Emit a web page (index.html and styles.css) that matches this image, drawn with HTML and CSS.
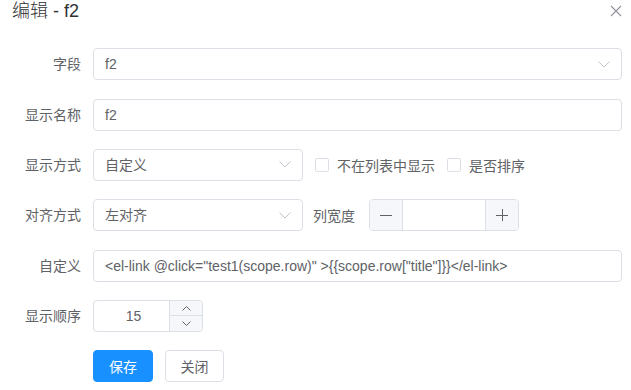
FILE: index.html
```html
<!DOCTYPE html>
<html lang="zh-CN">
<head>
<meta charset="utf-8">
<title>编辑 - f2</title>
<link rel="stylesheet" href="styles.css">
</head>
<body>
<div class="dialog">
  <div class="header">
    <span class="title">编辑 - f2</span>
    <svg class="close" width="12" height="12" viewBox="0 0 12 12"><path d="M1 1L11 11M11 1L1 11" stroke="#909399" stroke-width="1.1" fill="none"/></svg>
  </div>
  <form class="form">
    <div class="row">
      <label class="label">字段</label>
      <div class="content">
        <div class="select full">
          <span class="value">f2</span>
          <svg class="chev" width="12" height="7" viewBox="0 0 12 7"><path d="M0.5 0.5L6 6L11.5 0.5" stroke="#c0c4cc" stroke-width="1" fill="none"/></svg>
        </div>
      </div>
    </div>
    <div class="row">
      <label class="label">显示名称</label>
      <div class="content">
        <div class="input full"><span class="value">f2</span></div>
      </div>
    </div>
    <div class="row">
      <label class="label">显示方式</label>
      <div class="content">
        <div class="select short">
          <span class="value">自定义</span>
          <svg class="chev" width="12" height="7" viewBox="0 0 12 7"><path d="M0.5 0.5L6 6L11.5 0.5" stroke="#c0c4cc" stroke-width="1" fill="none"/></svg>
        </div>
        <div class="checks">
          <span class="check"><span class="box"></span>不在列表中显示</span>
          <span class="check"><span class="box"></span>是否排序</span>
        </div>
      </div>
    </div>
    <div class="row">
      <label class="label">对齐方式</label>
      <div class="content">
        <div class="select short">
          <span class="value">左对齐</span>
          <svg class="chev" width="12" height="7" viewBox="0 0 12 7"><path d="M0.5 0.5L6 6L11.5 0.5" stroke="#c0c4cc" stroke-width="1" fill="none"/></svg>
        </div>
        <span class="inline-label">列宽度</span>
        <div class="numbox">
          <span class="nbtn minus"><svg width="12" height="12" viewBox="0 0 12 12"><path d="M0 6.5H12" stroke="#606266" stroke-width="1"/></svg></span>
          <span class="nval"></span>
          <span class="nbtn plus"><svg width="12" height="12" viewBox="0 0 12 12"><path d="M0 6.5H12M6.5 0V12" stroke="#606266" stroke-width="1"/></svg></span>
        </div>
      </div>
    </div>
    <div class="row">
      <label class="label">自定义</label>
      <div class="content">
        <div class="input full"><span class="value">&lt;el-link @click="test1(scope.row)" &gt;{{scope.row["title"]}}&lt;/el-link&gt;</span></div>
      </div>
    </div>
    <div class="row">
      <label class="label">显示顺序</label>
      <div class="content">
        <div class="spin">
          <span class="sval">15</span>
          <span class="sctrl">
            <span class="sbtn up"><svg width="9" height="5" viewBox="0 0 9 5"><path d="M0.5 4.5L4.5 0.5L8.5 4.5" stroke="#606266" stroke-width="1" fill="none"/></svg></span>
            <span class="sbtn down"><svg width="9" height="5" viewBox="0 0 9 5"><path d="M0.5 0.5L4.5 4.5L8.5 0.5" stroke="#606266" stroke-width="1" fill="none"/></svg></span>
          </span>
        </div>
      </div>
    </div>
    <div class="row">
      <span class="label"></span>
      <div class="content">
        <button type="button" class="btn primary">保存</button>
        <button type="button" class="btn plain">关闭</button>
      </div>
    </div>
  </form>
</div>
</body>
</html>
```
FILE: styles.css
```css
html, body {
  margin: 0;
  padding: 0;
  background: #fff;
}
body {
  font-family: "Liberation Sans", "Noto Sans CJK SC", sans-serif;
  font-size: 14px;
  color: #606266;
}
.dialog {
  width: 631px;
  height: 390px;
  box-sizing: border-box;
}
.header {
  display: flex;
  justify-content: space-between;
  align-items: center;
  height: 22px;
  padding: 0 9px 0 12px;
}
.title {
  font-size: 18px;
  line-height: 22px;
  font-weight: 300;
  color: #303133;
}
.close {
  display: block;
  margin-top: 0;
}
.form {
  margin: 26.33px 0 0 0;
  padding-right: 9px;
}
.row {
  display: flex;
  align-items: center;
  height: 32px;
  margin-bottom: 18.33px;
}
.label {
  width: 93px;
  flex: none;
  box-sizing: border-box;
  padding-right: 12px;
  text-align: right;
  line-height: 32px;
  color: #606266;
}
.content {
  flex: 1;
  display: flex;
  align-items: center;
  height: 32px;
}
.input, .select {
  box-sizing: border-box;
  height: 32px;
  border: 1px solid #dcdfe6;
  border-radius: 4px;
  display: flex;
  align-items: center;
  padding: 0 11px;
  color: #606266;
  background: #fff;
}
.full { width: 100%; }
.short { width: 210px; flex: none; }
.select { justify-content: space-between; }
.value { white-space: nowrap; line-height: 30px; }
.chev { display: block; }
.checks {
  display: flex;
  align-items: center;
  margin-left: 12px;
  gap: 12px;
}
.check {
  display: flex;
  align-items: center;
  gap: 8px;
  color: #606266;
}
.box {
  width: 14px;
  height: 14px;
  box-sizing: border-box;
  border: 1px solid #dcdfe6;
  border-radius: 2px;
  background: #fff;
}
.inline-label {
  margin-left: 10px;
  margin-right: 14px;
}
.numbox {
  width: 150px;
  height: 32px;
  box-sizing: border-box;
  border: 1px solid #dcdfe6;
  border-radius: 4px;
  display: flex;
  overflow: hidden;
}
.nbtn {
  width: 32px;
  flex: none;
  background: #f5f7fa;
  display: flex;
  align-items: center;
  justify-content: center;
}
.nbtn svg { display: block; }
.minus { border-right: 1px solid #dcdfe6; }
.plus { border-left: 1px solid #dcdfe6; }
.nval { flex: 1; }
.spin {
  width: 110px;
  height: 32px;
  box-sizing: border-box;
  border: 1px solid #dcdfe6;
  border-radius: 4px;
  display: flex;
  overflow: hidden;
}
.sval {
  flex: 1;
  text-align: center;
  line-height: 30px;
  padding-left: 4px;
  color: #606266;
}
.sctrl {
  width: 32px;
  flex: none;
  display: flex;
  flex-direction: column;
  border-left: 1px solid #dcdfe6;
  background: #f5f7fa;
}
.sbtn {
  flex: 1;
  display: flex;
  align-items: center;
  justify-content: center;
}
.sbtn svg { display: block; }
.up { border-bottom: 1px solid #dcdfe6; }
.btn {
  height: 32px;
  width: 60px;
  box-sizing: border-box;
  border-radius: 4px;
  font-family: inherit;
  font-size: 14px;
  padding: 0;
  margin: 0;
  cursor: pointer;
}
.primary {
  background: #1890ff;
  border: 1px solid #1890ff;
  color: #fff;
}
.plain {
  background: #fff;
  border: 1px solid #dcdfe6;
  color: #606266;
  margin-left: 12px;
  width: 59px;
}
```
